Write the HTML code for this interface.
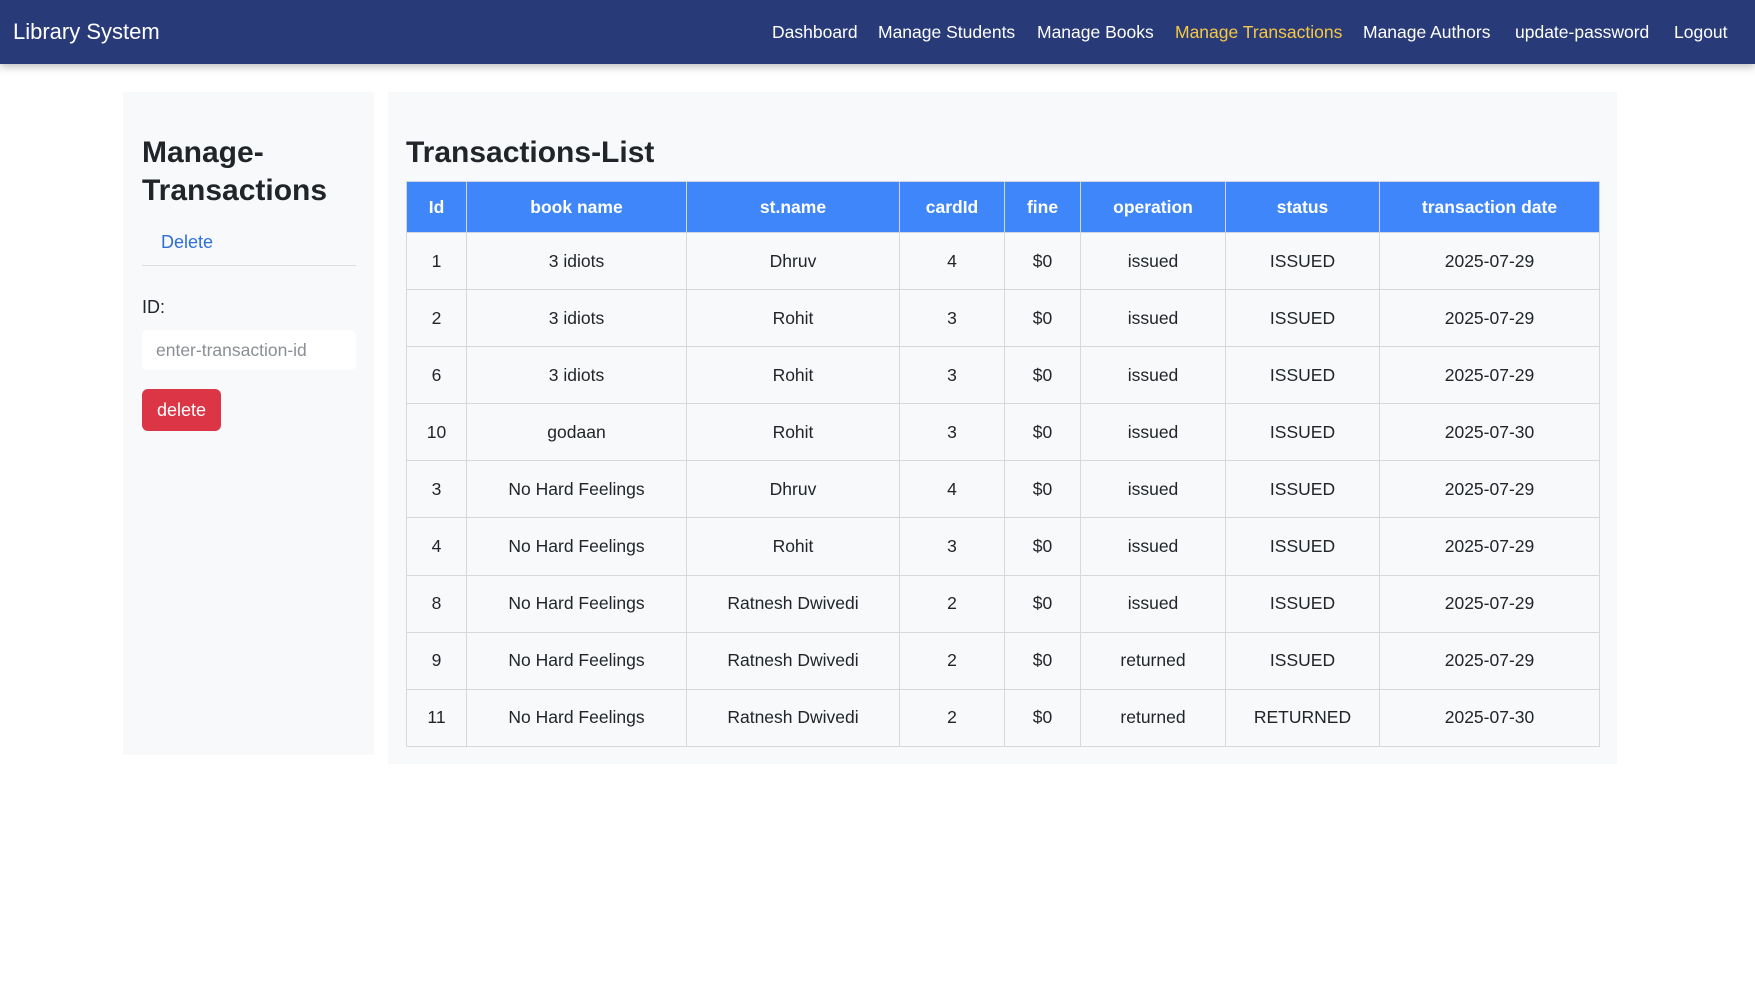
<!DOCTYPE html>
<html><head><meta charset="utf-8"><style>
*{box-sizing:border-box;margin:0;padding:0}
body{width:1755px;height:987px;background:#fff;font-family:"Liberation Sans",Arial,sans-serif;color:#212529;position:relative;overflow:hidden}
.nav{position:absolute;left:0;top:0;width:1755px;height:64px;background:#283a78;box-shadow:0 3px 8px rgba(0,0,0,.25)}
.brand{position:absolute;left:13px;top:19px;font-size:22px;color:#fff}
.nav a{position:absolute;top:22px;font-size:17.5px;color:#fff;text-decoration:none;white-space:nowrap}
.panel{position:absolute;background:#f8f9fa}
h2{font-size:30px;font-weight:bold;line-height:38px;color:#212529}
table{position:absolute;left:406px;top:181px;width:1193px;border-collapse:collapse;table-layout:fixed;font-size:17.5px}
th{background:#3f86fb;color:#fff;height:51px;border:1px solid #d0d7e2;font-weight:bold}
td{height:57.1px;text-align:center;border:1px solid #d6d8db;background:#f8f9fa}
</style></head><body>
<div class="nav">
<div class="brand">Library System</div>
<a style="left:772px">Dashboard</a>
<a style="left:878px">Manage Students</a>
<a style="left:1037px">Manage Books</a>
<a style="left:1175px;color:#f5c945">Manage Transactions</a>
<a style="left:1363px">Manage Authors</a>
<a style="left:1515px">update-password</a>
<a style="left:1674px">Logout</a>
</div>
<div class="panel" style="left:123px;top:92px;width:251px;height:663px"></div>
<div class="panel" style="left:388px;top:92px;width:1229px;height:672px"></div>
<h2 style="position:absolute;left:142px;top:134px">Manage-<br>Transactions</h2>
<div style="position:absolute;left:161px;top:232px;font-size:18px;color:#2f6fd8">Delete</div>
<div style="position:absolute;left:142px;top:265px;width:214px;border-top:1px solid #dcdfe3"></div>
<div style="position:absolute;left:142px;top:297px;font-size:18px">ID:</div>
<div style="position:absolute;left:142px;top:330px;width:214px;height:40px;background:#fff;border-radius:6px;padding:10px 14px;font-size:17.5px;color:#8a8f95">enter-transaction-id</div>
<div style="position:absolute;left:142px;top:389px;width:79px;height:42px;background:#dc3545;border-radius:6px;color:#fff;font-size:18px;text-align:center;line-height:42px">delete</div>
<h2 style="position:absolute;left:406px;top:134px">Transactions-List</h2>
<table>
<colgroup><col style="width:60px"><col style="width:220px"><col style="width:213px"><col style="width:105px"><col style="width:76px"><col style="width:145px"><col style="width:154px"><col style="width:220px"></colgroup>
<tr><th>Id</th><th>book name</th><th>st.name</th><th>cardId</th><th>fine</th><th>operation</th><th>status</th><th>transaction date</th></tr>
<tr><td>1</td><td>3 idiots</td><td>Dhruv</td><td>4</td><td>$0</td><td>issued</td><td>ISSUED</td><td>2025-07-29</td></tr>
<tr><td>2</td><td>3 idiots</td><td>Rohit</td><td>3</td><td>$0</td><td>issued</td><td>ISSUED</td><td>2025-07-29</td></tr>
<tr><td>6</td><td>3 idiots</td><td>Rohit</td><td>3</td><td>$0</td><td>issued</td><td>ISSUED</td><td>2025-07-29</td></tr>
<tr><td>10</td><td>godaan</td><td>Rohit</td><td>3</td><td>$0</td><td>issued</td><td>ISSUED</td><td>2025-07-30</td></tr>
<tr><td>3</td><td>No Hard Feelings</td><td>Dhruv</td><td>4</td><td>$0</td><td>issued</td><td>ISSUED</td><td>2025-07-29</td></tr>
<tr><td>4</td><td>No Hard Feelings</td><td>Rohit</td><td>3</td><td>$0</td><td>issued</td><td>ISSUED</td><td>2025-07-29</td></tr>
<tr><td>8</td><td>No Hard Feelings</td><td>Ratnesh Dwivedi</td><td>2</td><td>$0</td><td>issued</td><td>ISSUED</td><td>2025-07-29</td></tr>
<tr><td>9</td><td>No Hard Feelings</td><td>Ratnesh Dwivedi</td><td>2</td><td>$0</td><td>returned</td><td>ISSUED</td><td>2025-07-29</td></tr>
<tr><td>11</td><td>No Hard Feelings</td><td>Ratnesh Dwivedi</td><td>2</td><td>$0</td><td>returned</td><td>RETURNED</td><td>2025-07-30</td></tr>
</table>
</body></html>
